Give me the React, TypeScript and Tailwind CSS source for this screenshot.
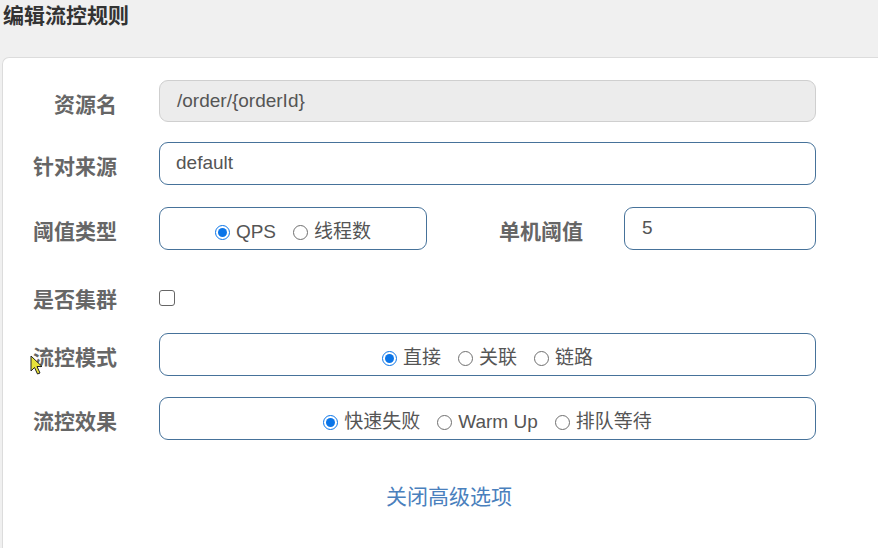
import React from "react";

const font = "font-['Liberation_Sans','Noto_Sans_CJK_SC',sans-serif]";

const Label = ({ text, className = "" }: { text: string; className?: string }) => (
  <div className={`shrink-0 pt-[7px] text-right text-[21px] font-bold text-[#666] ${className}`}>{text}</div>
);

const Radio = ({ label, checked }: { label: string; checked?: boolean }) => (
  <label className="flex items-center gap-[6px]">
    <span
      className={`flex h-[15px] w-[15px] shrink-0 items-center justify-center rounded-full bg-white ${
        checked ? "border-[1.5px] border-[#0b75e8]" : "border border-[#6f6f6f]"
      }`}
    >
      {checked && <span className="h-[9px] w-[9px] rounded-full bg-[#0b75e8]" />}
    </span>
    <span>{label}</span>
  </label>
);

const RadioBox = ({ options, className = "" }: { options: string[]; className?: string }) => (
  <div
    className={`flex h-[43px] items-center justify-center gap-[17px] rounded-[9px] border border-[#46729a] pt-[8px] text-[19px] text-[#555] ${className}`}
  >
    {options.map((o, i) => (
      <Radio key={o} label={o} checked={i === 0} />
    ))}
  </div>
);

export default function App() {
  return (
    <div className={`relative h-[548px] w-[878px] overflow-hidden bg-[#f0f0f0] ${font}`}>
      <div className="h-[57px] pl-[3px] pt-[1px] text-[21px] font-bold leading-[30px] text-[#333]">编辑流控规则</div>

      <div className="ml-[2px] h-[491px] rounded-tl-[7px] border-l border-t border-[#dcdcdc] bg-white pt-[22px]">
        {/* 资源名 */}
        <div className="flex h-[42px] items-center gap-[42px]">
          <Label text="资源名" className="w-[114px]" />
          <div className="flex h-full w-[657px] items-center rounded-[9px] border border-[#cfcfcf] bg-[#ececec] px-[17px] text-[19px] text-[#555]">
            /order/{"{orderId}"}
          </div>
        </div>

        {/* 针对来源 */}
        <div className="mt-[20px] flex h-[43px] items-center gap-[42px]">
          <Label text="针对来源" className="w-[114px]" />
          <div className="flex h-full w-[657px] items-center rounded-[9px] border border-[#46729a] px-[16px] text-[19px] text-[#555]">
            default
          </div>
        </div>

        {/* 阈值类型 / 单机阈值 */}
        <div className="mt-[22px] flex h-[43px] items-center gap-[42px]">
          <Label text="阈值类型" className="w-[114px]" />
          <div className="flex h-full items-center">
            <RadioBox options={["QPS", "线程数"]} className="w-[268px]" />
            <Label text="单机阈值" className="w-[156px]" />
            <div className="ml-[41px] flex h-full w-[192px] items-center rounded-[9px] border border-[#46729a] px-[17px] text-[19px] text-[#555]">
              5
            </div>
          </div>
        </div>

        {/* 是否集群 */}
        <div className="mt-[24px] flex h-[44px] items-center gap-[42px]">
          <Label text="是否集群" className="w-[114px]" />
          <span className="mt-[3px] h-[16px] w-[16px] rounded-[3px] border-[1.5px] border-[#666] bg-white" />
        </div>

        {/* 流控模式 */}
        <div className="mt-[15px] flex h-[43px] items-center gap-[42px]">
          <Label text="流控模式" className="w-[114px]" />
          <RadioBox options={["直接", "关联", "链路"]} className="w-[657px]" />
        </div>

        {/* 流控效果 */}
        <div className="mt-[21px] flex h-[43px] items-center gap-[42px]">
          <Label text="流控效果" className="w-[114px]" />
          <RadioBox options={["快速失败", "Warm Up", "排队等待"]} className="w-[657px]" />
        </div>

        <div className="mt-[45px] pl-[383px] text-[21px] leading-[24px] text-[#4a80bd]">关闭高级选项</div>
      </div>

      {/* mouse pointer */}
      <svg className="absolute left-[30px] top-[355px]" width="14" height="20" viewBox="0 0 14 20">
        <path d="M1 1 L1 16 L4.5 12.5 L7.5 19 L10 18 L7 11.5 L12 11.5 Z" fill="#e8e23a" stroke="#222" strokeWidth="1" />
      </svg>
    </div>
  );
}
